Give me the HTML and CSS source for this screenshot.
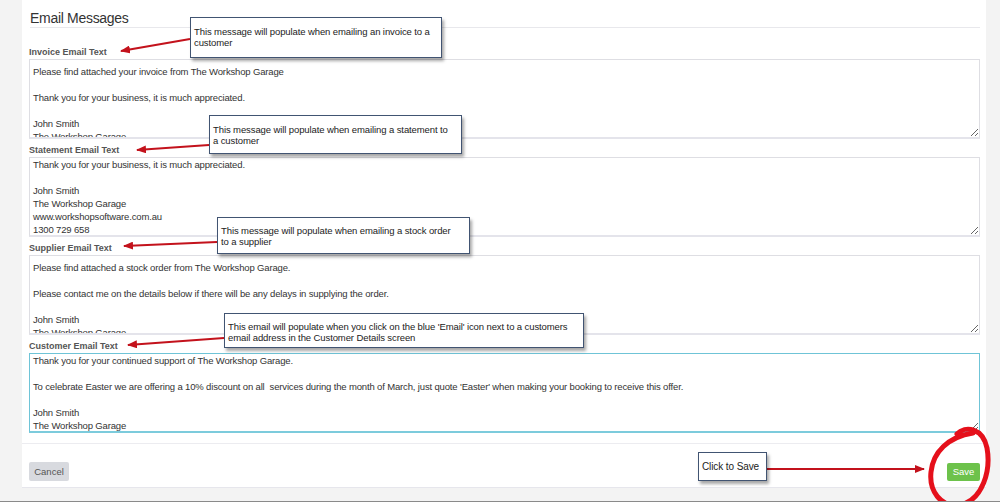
FILE: index.html
```html
<!DOCTYPE html>
<html lang="en">
<head>
<meta charset="UTF-8">
<meta name="viewport" content="width=device-width, initial-scale=1.0">
<title>Email Messages</title>
<link rel="stylesheet" href="styles.css">
</head>
<body>
<div class="page">
    <div class="panel">
        <div class="panel-body">
            <h2 class="panel-title">Email Messages</h2>

            <div class="field field-first">
                <label class="field-label">Invoice Email Text</label>
                <textarea class="field-input">Please find attached your invoice from The Workshop Garage

Thank you for your business, it is much appreciated.

John Smith
The Workshop Garage</textarea>
            </div>

            <div class="field">
                <label class="field-label">Statement Email Text</label>
                <textarea class="field-input scrolled">Thank you for your business, it is much appreciated.

John Smith
The Workshop Garage
www.workshopsoftware.com.au
1300 729 658</textarea>
            </div>

            <div class="field">
                <label class="field-label">Supplier Email Text</label>
                <textarea class="field-input">Please find attached a stock order from The Workshop Garage.

Please contact me on the details below if there will be any delays in supplying the order.

John Smith
The Workshop Garage</textarea>
            </div>

            <div class="field">
                <label class="field-label">Customer Email Text</label>
                <textarea class="field-input scrolled focused">Thank you for your continued support of The Workshop Garage.

To celebrate Easter we are offering a 10% discount on all  services during the month of March, just quote 'Easter' when making your booking to receive this offer.

John Smith
The Workshop Garage</textarea>
            </div>
        </div>

        <div class="panel-footer">
            <button class="btn btn-cancel">Cancel</button>
            <button class="btn btn-save">Save</button>
        </div>
    </div>
</div>

<!-- annotations drawn over the screenshot -->
<svg class="marks" width="1000" height="502" viewBox="0 0 1000 502">
    <defs>
        <marker id="head" markerWidth="5" markerHeight="4" refX="4.5" refY="2" orient="auto" markerUnits="strokeWidth">
            <path d="M0,0 L5,2 L0,4 Z" fill="#c3121c"/>
        </marker>
    </defs>
    <g stroke="#c3121c" stroke-width="2" fill="none">
        <line x1="190" y1="39" x2="121" y2="51" marker-end="url(#head)"/>
        <line x1="209" y1="145" x2="137" y2="150" marker-end="url(#head)"/>
        <line x1="217" y1="242" x2="124" y2="246" marker-end="url(#head)"/>
        <line x1="224" y1="338" x2="128" y2="345" marker-end="url(#head)"/>
        <line x1="767" y1="469" x2="924" y2="469" marker-end="url(#head)"/>
    </g>
    <path d="M957 434 C965 425 983 428 987 448 C991 470 983 500 960 505 C940 508 929 490 931 472 C933 452 948 437 973 433"
          stroke="#e5101b" stroke-width="5" fill="none" stroke-linecap="round"/>
</svg>

<div class="note note-invoice">This message will populate when emailing an invoice to a customer</div>
<div class="note note-statement">This message will populate when emailing a statement to a customer</div>
<div class="note note-supplier">This message will populate when emailing a stock order to a supplier</div>
<div class="note note-customer">This email will populate when you click on the blue 'Email' icon next to a customers email address in the Customer Details screen</div>
<div class="note note-save">Click to Save</div>
</body>
</html>
```

FILE: styles.css
```css
html {
    height: 502px;
}
body {
    margin: 0;
    height: 100%;
    box-sizing: border-box;
    background-color: #f3f3f3;
    border-bottom: 1px solid #8a8a8a;
    font-family: "Liberation Sans", Arial, sans-serif;
    color: #333;
    position: relative;
    overflow: hidden;
}
.page {
    padding-left: 22px;
    width: 964px;
}
.panel {
    background-color: #fff;
    border-bottom: 1px solid #e6e6ec;
}
.panel-body {
    padding: 0 6px 0 7px;
}
.panel-title {
    margin: 0 0 0 1px;
    padding-top: 9px;
    font-size: 14px;
    font-weight: normal;
    line-height: 18px;
    letter-spacing: -0.3px;
    color: #333;
    border-bottom: 1px solid #e8e8ec;
}
.field {
    margin-top: 5px;
}
.field-first {
    margin-top: 18px;
}
.field-label {
    display: block;
    margin-bottom: 1px;
    font-size: 9px;
    font-weight: bold;
    line-height: 12px;
    color: #555;
}
.field-input {
    display: block;
    width: 100%;
    height: 80px;
    box-sizing: border-box;
    margin: 0;
    padding: 5px 3px;
    border: 1px solid #dedee3;
    border-bottom: 2px solid #e4e4eb;
    font-family: "Liberation Sans", Arial, sans-serif;
    font-size: 9.5px;
    letter-spacing: -0.15px;
    line-height: 13px;
    color: #333;
    overflow: hidden;
    outline: none;
}
.field-input.scrolled {
    padding-top: 0;
}
.field-input.focused {
    border: 1px solid #6fc4d7;
    border-bottom: 2px solid #7ccbdc;
}
.panel-footer {
    display: flex;
    justify-content: space-between;
    align-items: center;
    margin-top: 10px;
    padding: 18px 6px 6px 7px;
    border-top: 1px solid #ececf0;
}
.btn {
    height: 19px;
    padding: 0;
    border: none;
    border-radius: 2px;
    font-family: "Liberation Sans", Arial, sans-serif;
    font-size: 9.5px;
    cursor: pointer;
}
.btn-cancel {
    width: 40px;
    background-color: #d8dadf;
    color: #555;
}
.btn-save {
    width: 33px;
    height: 18px;
    background-color: #6dc24b;
    color: #fff;
}

/* annotation layer */
.marks {
    position: absolute;
    left: 0;
    top: 0;
    pointer-events: none;
}
.note {
    position: absolute;
    box-sizing: border-box;
    padding: 8px 3px 4px 3px;
    background-color: #fff;
    border: 1px solid #415472;
    box-shadow: 2px 3px 3px rgba(0, 0, 0, 0.35);
    font-size: 9.5px;
    letter-spacing: -0.1px;
    line-height: 11px;
    color: #222;
}
.note-invoice {
    left: 190px;
    top: 17px;
    width: 252px;
    height: 41px;
}
.note-statement {
    left: 209px;
    top: 115px;
    width: 253px;
    height: 39px;
    padding-right: 10px;
}
.note-supplier {
    left: 217px;
    top: 217px;
    width: 253px;
    height: 37px;
    padding-top: 7px;
    padding-right: 14px;
}
.note-customer {
    left: 224px;
    top: 313px;
    width: 360px;
    height: 35px;
    padding-top: 7px;
}
.note-save {
    left: 698px;
    top: 452px;
    width: 69px;
    height: 29px;
    padding-top: 8px;
    font-size: 10px;
    line-height: 12px;
    white-space: nowrap;
}
```
